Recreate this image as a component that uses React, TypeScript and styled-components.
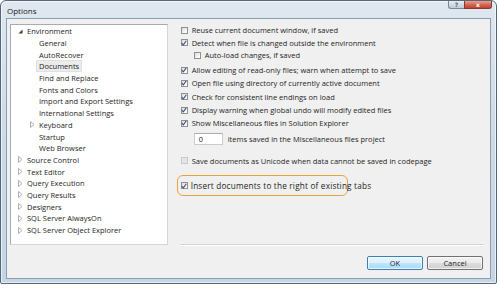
import React from 'react'
import styled, { createGlobalStyle } from 'styled-components'

const GlobalStyle = createGlobalStyle`
  html, body {
    margin: 0;
    padding: 0;
    background: #ffffff;
  }
  body {
    font-family: 'Open Sans', 'Noto Sans', 'DejaVu Sans', sans-serif;
    font-size: 7.5px;
    color: #1e1e1e;
  }
`

interface TreeNode {
  label: string
  depth: number
  expander?: 'open' | 'closed'
  selected?: boolean
}

const treeNodes: TreeNode[] = [
  { label: 'Environment', depth: 0, expander: 'open' },
  { label: 'General', depth: 1 },
  { label: 'AutoRecover', depth: 1 },
  { label: 'Documents', depth: 1, selected: true },
  { label: 'Find and Replace', depth: 1 },
  { label: 'Fonts and Colors', depth: 1 },
  { label: 'Import and Export Settings', depth: 1 },
  { label: 'International Settings', depth: 1 },
  { label: 'Keyboard', depth: 1, expander: 'closed' },
  { label: 'Startup', depth: 1 },
  { label: 'Web Browser', depth: 1 },
  { label: 'Source Control', depth: 0, expander: 'closed' },
  { label: 'Text Editor', depth: 0, expander: 'closed' },
  { label: 'Query Execution', depth: 0, expander: 'closed' },
  { label: 'Query Results', depth: 0, expander: 'closed' },
  { label: 'Designers', depth: 0, expander: 'closed' },
  { label: 'SQL Server AlwaysOn', depth: 0, expander: 'closed' },
  { label: 'SQL Server Object Explorer', depth: 0, expander: 'closed' },
]

const Expander: React.FC<{ kind?: 'open' | 'closed' }> = ({ kind }) => (
  <ExpanderSlot>
    {kind === 'open' && (
      <svg width="5" height="5" viewBox="0 0 5 5">
        <path d="M4.5 0.5 L4.5 4.5 L0.5 4.5 Z" fill="#3b3b3b" />
      </svg>
    )}
    {kind === 'closed' && (
      <svg width="5" height="7" viewBox="0 0 5 7">
        <path d="M0.5 0.5 L4 3.5 L0.5 6.5 Z" fill="none" stroke="#a6a6a6" strokeWidth="0.9" />
      </svg>
    )}
  </ExpanderSlot>
)

const CheckBox: React.FC<{ checked?: boolean; disabled?: boolean }> = ({ checked, disabled }) => (
  <Box $disabled={disabled}>
    {checked && (
      <svg width="6" height="6" viewBox="0 0 6 6">
        <path d="M0.8 3.2 L2.4 4.9 L5.3 0.8" fill="none" stroke="#3e4f7c" strokeWidth="1.1" />
      </svg>
    )}
  </Box>
)

interface OptionProps {
  label: string
  checked?: boolean
  disabled?: boolean
  indent?: boolean
  gap?: number
  height?: number
}

const Option: React.FC<OptionProps> = ({ label, checked, disabled, indent, gap = 0, height = 13 }) => (
  <OptionRow $indent={indent} $gap={gap} $height={height}>
    <CheckBox checked={checked} disabled={disabled} />
    <span>{label}</span>
  </OptionRow>
)

const App: React.FC = () => {
  return (
    <>
      <GlobalStyle />
      <Window>
        <TitleBar>
          <Title>Options</Title>
          <CaptionButtons>
            <HelpButton>?</HelpButton>
            <CloseButton>x</CloseButton>
          </CaptionButtons>
        </TitleBar>
        <Client>
          <Main>
            <Tree>
              {treeNodes.map((node) => (
                <TreeRow key={node.label} $depth={node.depth}>
                  <Expander kind={node.expander} />
                  <TreeLabel $selected={node.selected}>{node.label}</TreeLabel>
                </TreeRow>
              ))}
            </Tree>
            <Options>
              <Option label="Reuse current document window, if saved" height={12.5} />
              <Option label="Detect when file is changed outside the environment" checked height={12.5} />
              <Option label="Auto-load changes, if saved" indent height={12.5} />
              <Option label="Allow editing of read-only files; warn when attempt to save" checked gap={2} height={13.3} />
              <Option label="Open file using directory of currently active document" checked height={13.3} />
              <Option label="Check for consistent line endings on load" checked height={13.3} />
              <Option label="Display warning when global undo will modify edited files" checked height={13.3} />
              <Option label="Show Miscellaneous files in Solution Explorer" checked height={13.3} />
              <CountRow>
                <TextBox>0</TextBox>
                <span>items saved in the Miscellaneous files project</span>
              </CountRow>
              <Option label="Save documents as Unicode when data cannot be saved in codepage" disabled gap={9.5} />
              <Highlight>
                <CheckBox checked />
                <HighlightLabel>Insert documents to the right of existing tabs</HighlightLabel>
              </Highlight>
            </Options>
          </Main>
          <Footer>
            <Button $default>OK</Button>
            <Button>Cancel</Button>
          </Footer>
        </Client>
      </Window>
    </>
  )
}

const Window = styled.div`
  box-sizing: border-box;
  width: 497px;
  height: 284px;
  border: 1px solid #55677a;
  border-radius: 6px 6px 2px 2px;
  background: linear-gradient(180deg, #dfe8f1 0%, #cfdce8 40%, #c4d5e5 100%);
  padding: 0 5px 4px 5px;
  display: flex;
  flex-direction: column;
  box-shadow: inset 0 0 0 1px rgba(255, 255, 255, 0.6);
`

const TitleBar = styled.div`
  height: 17px;
  display: flex;
  align-items: flex-start;
`

const Title = styled.div`
  font-size: 8px;
  color: #1a1a1a;
  margin: 4px 0 0 1px;
`

const CaptionButtons = styled.div`
  margin-left: auto;
  margin-right: -1px;
  display: flex;
  height: 8px;
`

const CaptionButton = styled.div`
  height: 8px;
  box-sizing: border-box;
  display: flex;
  align-items: center;
  justify-content: center;
  font-family: 'DejaVu Sans', sans-serif;
  font-size: 6px;
  font-weight: bold;
  border: 1px solid #7a8796;
  border-top: none;
`

const HelpButton = styled(CaptionButton)`
  width: 16px;
  border-radius: 0 0 0 3px;
  border-right: none;
  color: #5a6470;
  background: linear-gradient(180deg, #e8eef4 0%, #d2dbe4 50%, #c0cbd6 100%);
`

const CloseButton = styled(CaptionButton)`
  width: 28px;
  border-radius: 0 0 3px 0;
  border-color: #8a3a30;
  color: #ffffff;
  background: linear-gradient(180deg, #e7a290 0%, #d56a52 50%, #c3402a 100%);
`

const Client = styled.div`
  box-sizing: border-box;
  width: 485px;
  height: 261px;
  background: #f0f0f0;
  border: 1px solid #8f9eac;
  display: flex;
  flex-direction: column;
  padding: 5px 6px 0 3px;
`

const Main = styled.div`
  display: flex;
  height: 221px;
`

const Tree = styled.div`
  box-sizing: border-box;
  width: 158px;
  height: 221px;
  background: #ffffff;
  border: 1px solid #a5acb5;
  border-right-color: #d6d6d6;
  border-bottom-color: #d6d6d6;
  padding-top: 0.5px;
`

const TreeRow = styled.div<{ $depth: number }>`
  height: 11.7px;
  display: flex;
  align-items: center;
  padding-left: ${(p) => 7 + p.$depth * 12}px;
  white-space: nowrap;
`

const ExpanderSlot = styled.span`
  width: 9px;
  display: inline-flex;
  align-items: center;
`

const TreeLabel = styled.span<{ $selected?: boolean }>`
  padding: 0 2px;
  margin-left: -2px;
  line-height: 10px;
  ${(p) =>
    p.$selected
      ? `background: #ececec; outline: 1px solid #e0e0e0;`
      : ''}
`

const Options = styled.div`
  box-sizing: border-box;
  width: 305px;
  height: 221px;
  margin-left: 12px;
  padding-left: 1px;
  border-bottom: 1px solid #d5d5d5;
  box-shadow: 0 1px 0 #ffffff;
  display: flex;
  flex-direction: column;
`

const OptionRow = styled.div<{ $indent?: boolean; $gap: number; $height: number }>`
  height: ${(p) => p.$height}px;
  margin-top: ${(p) => p.$gap}px;
  display: flex;
  align-items: center;
  gap: 4px;
  padding-left: ${(p) => (p.$indent ? 13 : 0)}px;
  white-space: nowrap;
`

const Box = styled.span<{ $disabled?: boolean }>`
  box-sizing: border-box;
  width: 7px;
  height: 7px;
  flex: none;
  display: inline-flex;
  align-items: center;
  justify-content: center;
  border: 1px solid ${(p) => (p.$disabled ? '#c9c9c9' : '#8e8f8f')};
  background: ${(p) =>
    p.$disabled ? '#e4e4e4' : 'linear-gradient(135deg, #dcdcdc 0%, #f4f4f4 60%, #ffffff 100%)'};
  svg {
    margin: -1px;
  }
`

const CountRow = styled.div`
  height: 12px;
  margin-top: 3px;
  display: flex;
  align-items: center;
  gap: 5px;
  padding-left: 13px;
  white-space: nowrap;
`

const TextBox = styled.div`
  box-sizing: border-box;
  width: 29px;
  height: 12px;
  background: #ffffff;
  border: 1px solid #c8cbd0;
  border-top-color: #abadb3;
  padding-left: 4px;
  line-height: 10px;
`

const Highlight = styled.div`
  box-sizing: border-box;
  align-self: flex-start;
  margin: 8px 0 0 -4px;
  height: 21px;
  width: 171px;
  border: 1.5px solid #e8a33e;
  border-radius: 6px;
  display: flex;
  align-items: center;
  gap: 3px;
  padding-left: 3px;
  white-space: nowrap;
`

const HighlightLabel = styled.span`
  font-size: 8.2px;
  letter-spacing: 0.2px;
`

const Footer = styled.div`
  display: flex;
  justify-content: flex-end;
  gap: 4px;
  margin-top: 11px;
  padding-right: 1px;
`

const Button = styled.div<{ $default?: boolean }>`
  box-sizing: border-box;
  width: 56px;
  height: 14px;
  display: flex;
  align-items: center;
  justify-content: center;
  border-radius: 2px;
  border: 1px solid ${(p) => (p.$default ? '#3c7fb1' : '#707070')};
  background: ${(p) =>
    p.$default
      ? 'linear-gradient(180deg, #eaf6fd 0%, #d9f0fc 50%, #bee6fd 51%, #a7d9f5 100%)'
      : 'linear-gradient(180deg, #f2f2f2 0%, #ebebeb 50%, #dddddd 51%, #cfcfcf 100%)'};
  box-shadow: inset 0 0 0 1px rgba(255, 255, 255, 0.7);
  font-size: 7.5px;
`

export default App
